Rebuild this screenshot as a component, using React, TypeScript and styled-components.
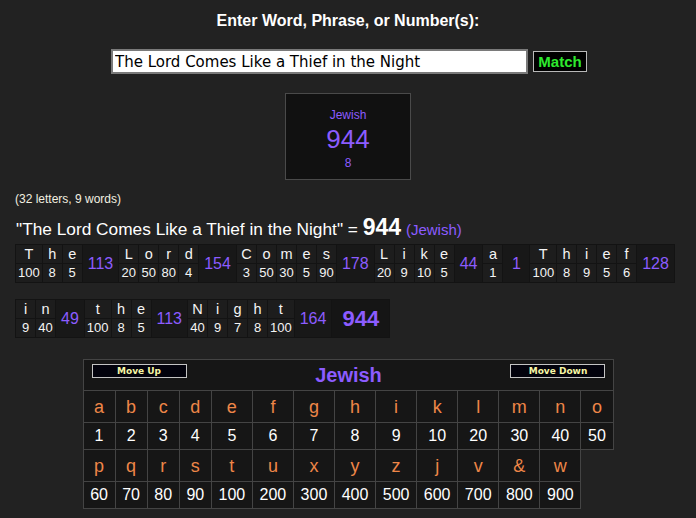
import { createGlobalStyle, styled } from "styled-components";

const GlobalStyle = createGlobalStyle`
  body {
    margin: 0;
    background-color: #222222;
    color: #ffffff;
    font-family: "Liberation Sans", Arial, sans-serif;
  }
`;

const Page = styled.div`
  padding-top: 12px;
  padding-bottom: 10px;
`;

const Title = styled.div`
  text-align: center;
  font-size: 16px;
  line-height: 18px;
  font-weight: bold;
`;

const SearchForm = styled.div`
  display: flex;
  justify-content: center;
  align-items: center;
  gap: 5px;
  margin-top: 19px;
  padding-left: 2px;
`;

const PhraseInput = styled.input`
  box-sizing: border-box;
  width: 417px;
  height: 25px;
  border: 2px solid #7a7a7a;
  padding: 0 2px;
  background: #ffffff;
  color: #000000;
  font-family: "DejaVu Sans", Tahoma, sans-serif;
  font-size: 15px;
  outline: none;
`;

const MatchButton = styled.button`
  box-sizing: border-box;
  width: 54px;
  height: 21px;
  padding: 0;
  border: 1px solid #b8b8b8;
  background: #000000;
  color: #2ee82e;
  font-family: "Liberation Sans", Arial, sans-serif;
  font-size: 15px;
  font-weight: bold;
`;

const ResultBox = styled.div`
  box-sizing: border-box;
  width: 126px;
  height: 87px;
  margin: 19px auto 0;
  padding-top: 14px;
  background: #111111;
  border: 1px solid #4a4a4a;
  display: flex;
  flex-direction: column;
  align-items: center;
  color: #8c5cff;
`;

const ResultLabel = styled.div<{ $gap?: number }>`
  font-size: 12px;
  line-height: 14px;
  margin-top: ${(p) => p.$gap ?? 0}px;
`;

const ResultValue = styled.div`
  font-size: 26px;
  line-height: 30px;
  margin-top: 2px;
`;

const Breakdown = styled.div`
  padding: 0 15px;
`;

const Info = styled.div`
  margin-top: 12px;
  font-size: 12px;
  line-height: 14px;
  color: #f2f0e0;
`;

const QuoteLine = styled.div`
  margin-top: 12px;
  font-size: 17.3px;
  line-height: 18px;
  padding-left: 1px;
`;

const QuoteTotal = styled.span`
  font-size: 23px;
  font-weight: bold;
`;

const QuoteCipher = styled.span`
  font-size: 15px;
  color: #8c5cff;
`;

const WordTable = styled.table<{ $gap: number }>`
  margin-top: ${(p) => p.$gap}px;
  border-collapse: separate;
  border-spacing: 1px;
  background: #131313;
`;

const LetterCell = styled.td<{ $value?: boolean }>`
  box-sizing: border-box;
  height: 18px;
  min-width: 19px;
  padding: 0 2px;
  text-align: center;
  background: #1d1d1d;
  color: #f4f4f4;
  font-size: ${(p) => (p.$value ? "13px" : "14.5px")};
  line-height: 18px;
`;

const SumCell = styled.td`
  box-sizing: border-box;
  min-width: 26px;
  padding: 0 5px;
  text-align: center;
  background: #181818;
  color: #8c5cff;
  font-size: 16px;
`;

const TotalCell = styled.td`
  padding: 0 10px;
  text-align: center;
  background: #151515;
  color: #8c5cff;
  font-size: 22px;
  font-weight: bold;
`;

const CipherTable = styled.table`
  width: 531px;
  margin: 21px auto 0;
  border-collapse: collapse;
`;

const HeaderCell = styled.td`
  height: 31px;
  box-sizing: border-box;
  padding: 0;
  vertical-align: top;
  background: #161616;
  border: 1px solid #444444;
`;

const HeaderBar = styled.div`
  display: flex;
  justify-content: space-between;
  align-items: flex-start;
  padding: 4px 7px 0 8px;
`;

const MoveButton = styled.button`
  box-sizing: border-box;
  width: 95px;
  height: 14px;
  padding: 0;
  border: 1px solid #c4c4c4;
  background: #02020c;
  color: #f6f6a4;
  font-family: "DejaVu Sans", Verdana, sans-serif;
  font-size: 9px;
  font-weight: bold;
  line-height: 12px;
`;

const CipherTitle = styled.div`
  margin-top: -1px;
  color: #8c5cff;
  font-size: 20px;
  font-weight: bold;
  line-height: 24px;
`;

const CipherCell = styled.td<{ $letter?: boolean }>`
  box-sizing: border-box;
  height: ${(p) => (p.$letter ? "32px" : "27px")};
  padding: 0 6.5px;
  text-align: center;
  background: #161616;
  border: 1px solid #444444;
  color: ${(p) => (p.$letter ? "#ee8648" : "#ffffff")};
  font-size: ${(p) => (p.$letter ? "18px" : "16px")};
  line-height: 18px;
`;

type Word = { letters: [string, number][] };

const cipher: [string, number][] = [
  ["a", 1], ["b", 2], ["c", 3], ["d", 4], ["e", 5], ["f", 6], ["g", 7],
  ["h", 8], ["i", 9], ["k", 10], ["l", 20], ["m", 30], ["n", 40], ["o", 50],
  ["p", 60], ["q", 70], ["r", 80], ["s", 90], ["t", 100], ["u", 200], ["x", 300],
  ["y", 400], ["z", 500], ["j", 600], ["v", 700], ["&", 800], ["w", 900],
];

const valueOf = (ch: string) =>
  cipher.find(([l]) => l === ch.toLowerCase())?.[1] ?? 0;

const phrase = "The Lord Comes Like a Thief in the Night";

const toWord = (w: string): Word => ({
  letters: w.split("").map((ch) => [ch, valueOf(ch)]),
});

// the breakdown wraps after "Thief" in the original page
const lines: Word[][] = [
  ["The", "Lord", "Comes", "Like", "a", "Thief"].map(toWord),
  ["in", "the", "Night"].map(toWord),
];

const sum = (w: Word) => w.letters.reduce((t, [, v]) => t + v, 0);
const total = lines.flat().reduce((t, w) => t + sum(w), 0);

function WordLine({ words, gap, last }: { words: Word[]; gap: number; last?: boolean }) {
  return (
    <WordTable $gap={gap}>
      <tbody>
        <tr>
          {words.map((w, i) => [
            ...w.letters.map(([ch], j) => <LetterCell key={`${i}-${j}`}>{ch}</LetterCell>),
            <SumCell key={`s${i}`} rowSpan={2}>
              {sum(w)}
            </SumCell>,
          ])}
          {last && <TotalCell rowSpan={2}>{total}</TotalCell>}
        </tr>
        <tr>
          {words.map((w, i) =>
            w.letters.map(([, v], j) => (
              <LetterCell key={`${i}-${j}`} $value>
                {v}
              </LetterCell>
            ))
          )}
        </tr>
      </tbody>
    </WordTable>
  );
}

export default function App() {
  const rows = [cipher.slice(0, 14), cipher.slice(14)];
  return (
    <Page>
      <GlobalStyle />
      <Title>Enter Word, Phrase, or Number(s):</Title>
      <SearchForm>
        <PhraseInput defaultValue={phrase} />
        <MatchButton>Match</MatchButton>
      </SearchForm>

      <ResultBox>
        <ResultLabel>Jewish</ResultLabel>
        <ResultValue>{total}</ResultValue>
        <ResultLabel $gap={2}>8</ResultLabel>
      </ResultBox>

      <Breakdown>
        <Info>(32 letters, 9 words)</Info>
        <QuoteLine>
          "{phrase}" = <QuoteTotal>{total}</QuoteTotal> <QuoteCipher>(Jewish)</QuoteCipher>
        </QuoteLine>
        <WordLine words={lines[0]} gap={5} />
        <WordLine words={lines[1]} gap={16} last />
      </Breakdown>

      <CipherTable>
        <tbody>
          <tr>
            <HeaderCell colSpan={14}>
              <HeaderBar>
                <MoveButton>Move Up</MoveButton>
                <CipherTitle>Jewish</CipherTitle>
                <MoveButton>Move Down</MoveButton>
              </HeaderBar>
            </HeaderCell>
          </tr>
          {rows.map((row, r) => [
            <tr key={`l${r}`}>
              {row.map(([l]) => (
                <CipherCell key={l} $letter>
                  {l}
                </CipherCell>
              ))}
            </tr>,
            <tr key={`v${r}`}>
              {row.map(([l, v]) => (
                <CipherCell key={l}>{v}</CipherCell>
              ))}
            </tr>,
          ])}
        </tbody>
      </CipherTable>
    </Page>
  );
}
